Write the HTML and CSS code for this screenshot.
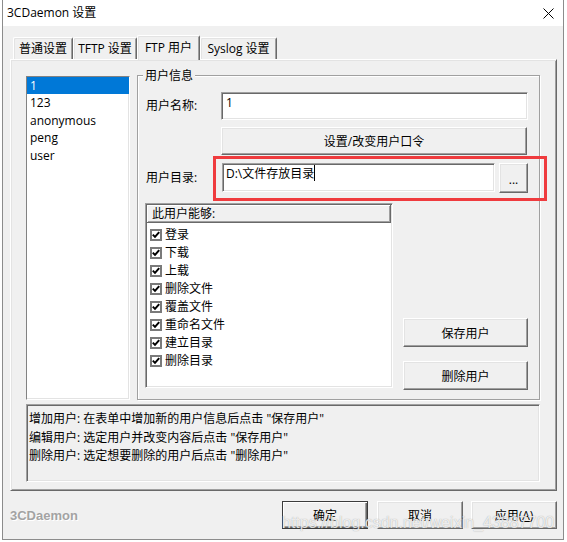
FILE: index.html
```html
<!DOCTYPE html>
<html lang="zh-CN">
<head>
  <meta charset="UTF-8">
  <title>3CDaemon 设置</title>
  <link rel="stylesheet" href="styles.css">
</head>
<body>
<div class="window">
  <div class="titlebar">
    <span class="title">3CDaemon 设置</span>
    <svg class="close" width="11" height="11" viewBox="0 0 11 11"><path d="M0.5 0.5L10.5 10.5M10.5 0.5L0.5 10.5" stroke="#000" stroke-width="1"/></svg>
  </div>
  <div class="body">
    <div class="tabs">
      <div class="tab t1">普通设置</div>
      <div class="tab t2">TFTP 设置</div>
      <div class="tab t3 active">FTP 用户</div>
      <div class="tab t4">Syslog 设置</div>
    </div>
    <div class="panel">
      <div class="panel-top">
        <ul class="userlist">
          <li class="selected">1</li>
          <li>123</li>
          <li>anonymous</li>
          <li>peng</li>
          <li>user</li>
        </ul>
        <div class="group">
          <div class="legend">用户信息</div>
          <div class="row name-row">
            <label>用户名称:</label>
            <div class="field name">1</div>
          </div>
          <div class="row pwd-row">
            <button class="btn pwd">设置/改变用户口令</button>
          </div>
          <div class="row dir-row">
            <label>用户目录:</label>
            <div class="field path">D:\文件存放目录<span class="caret"></span></div>
            <button class="btn browse">...</button>
            <div class="mark"></div>
          </div>
          <div class="row lower">
            <div class="perms">
              <div class="perms-head">此用户能够:</div>
              <ul class="perm-list">
                <li><span class="cb"><svg width="8" height="8" viewBox="0 0 8 8"><path d="M0.8 3.6L3 5.9L7.2 1.2" fill="none" stroke="#000" stroke-width="2"/></svg></span>登录</li>
                <li><span class="cb"><svg width="8" height="8" viewBox="0 0 8 8"><path d="M0.8 3.6L3 5.9L7.2 1.2" fill="none" stroke="#000" stroke-width="2"/></svg></span>下载</li>
                <li><span class="cb"><svg width="8" height="8" viewBox="0 0 8 8"><path d="M0.8 3.6L3 5.9L7.2 1.2" fill="none" stroke="#000" stroke-width="2"/></svg></span>上载</li>
                <li><span class="cb"><svg width="8" height="8" viewBox="0 0 8 8"><path d="M0.8 3.6L3 5.9L7.2 1.2" fill="none" stroke="#000" stroke-width="2"/></svg></span>删除文件</li>
                <li><span class="cb"><svg width="8" height="8" viewBox="0 0 8 8"><path d="M0.8 3.6L3 5.9L7.2 1.2" fill="none" stroke="#000" stroke-width="2"/></svg></span>覆盖文件</li>
                <li><span class="cb"><svg width="8" height="8" viewBox="0 0 8 8"><path d="M0.8 3.6L3 5.9L7.2 1.2" fill="none" stroke="#000" stroke-width="2"/></svg></span>重命名文件</li>
                <li><span class="cb"><svg width="8" height="8" viewBox="0 0 8 8"><path d="M0.8 3.6L3 5.9L7.2 1.2" fill="none" stroke="#000" stroke-width="2"/></svg></span>建立目录</li>
                <li><span class="cb"><svg width="8" height="8" viewBox="0 0 8 8"><path d="M0.8 3.6L3 5.9L7.2 1.2" fill="none" stroke="#000" stroke-width="2"/></svg></span>删除目录</li>
              </ul>
            </div>
            <div class="actions">
              <button class="btn save">保存用户</button>
              <button class="btn remove">删除用户</button>
            </div>
          </div>
        </div>
      </div>
      <div class="help">
        <div>增加用户: 在表单中增加新的用户信息后点击 "保存用户"</div>
        <div>编辑用户: 选定用户并改变内容后点击 "保存用户"</div>
        <div>删除用户: 选定想要删除的用户后点击 "删除用户"</div>
      </div>
    </div>
    <div class="footer">
      <span class="brand">3CDaemon</span>
      <button class="btn ok default">确定</button>
      <button class="btn cancel">取消</button>
      <button class="btn apply">应用(<u>A</u>)</button>
    </div>
  </div>
  <div class="watermark">https://blog.csdn.net/weixin_43887700</div>
</div>
</body>
</html>
```

FILE: styles.css
```css
* {
  box-sizing: border-box;
}
body {
  margin: 0;
  background: #fff;
  font-family: "Open Sans", "Noto Sans CJK SC", sans-serif;
  font-size: 12px;
  color: #000;
}
.window {
  position: relative;
  width: 562px;
  height: 540px;
  margin-left: 2px;
  border: 1px solid #8c8c8c;
  border-top: none;
  background: #f0f0f0;
}
.titlebar {
  height: 26px;
  background: #fff;
  display: flex;
  align-items: center;
  justify-content: space-between;
  padding: 0 9px 0 4px;
}
.title {
  line-height: 16px;
}
.body {
  padding-top: 9px;
}

/* tabs */
.tabs {
  display: flex;
  align-items: flex-end;
  height: 24px;
  padding-left: 10px;
}
.tab {
  height: 22px;
  line-height: 21px;
  text-align: center;
  background: #f0f0f0;
  border-top: 1px solid #fff;
  border-left: 1px solid #fff;
  border-right: 1px solid #696969;
  border-radius: 2px 2px 0 0;
  box-shadow: inset 1px 1px 0 #e3e3e3, inset -1px 0 0 #a0a0a0;
}
.t1 { width: 60px; }
.t2 { width: 64px; }
.t3 { width: 63px; }
.t4 { width: 77px; }
.tab.active {
  position: relative;
  z-index: 1;
  height: 25px;
  margin-bottom: -1px;
  line-height: 23px;
}

/* panel */
.panel {
  margin-left: 7px;
  width: 547px;
  height: 432px;
  border: 1px solid;
  border-color: #fff #696969 #696969 #fff;
  box-shadow: inset 1px 1px 0 #e3e3e3, inset -1px -1px 0 #a0a0a0;
  padding-left: 15px;
}
.panel-top {
  display: flex;
  align-items: flex-start;
}
.userlist {
  margin: 16px 0 0;
  padding: 0;
  list-style: none;
  width: 104px;
  height: 324px;
  background: #fff;
  border: 1px solid;
  border-color: #828282 #fff #fff #828282;
  box-shadow: inset -1px -1px 0 #e3e3e3;
}
.userlist li {
  height: 17.4px;
  line-height: 17.4px;
  padding-left: 3px;
}
.userlist li.selected {
  background: #0078d7;
  color: #fff;
}

/* user info group */
.group {
  margin: 15px 0 0 7px;
  width: 403px;
  height: 325px;
  border: 1px solid #a0a0a0;
  box-shadow: inset 1px 1px 0 #fff, 1px 1px 0 #fff;
  padding-left: 8px;
}
.legend {
  width: max-content;
  margin: -7px 0 0 -3px;
  padding: 0 2px;
  line-height: 13px;
  background: #f0f0f0;
}
.row {
  display: flex;
  align-items: center;
}
.row label {
  line-height: 16px;
}
.name-row {
  margin-top: 10px;
}
.name-row label {
  width: 75px;
}
.field {
  background: #fff;
  border: 1px solid;
  border-color: #a0a0a0 #fff #fff #a0a0a0;
  box-shadow: inset 1px 1px 0 #696969, inset -1px -1px 0 #e3e3e3;
  padding: 1px 4px;
  line-height: 17px;
}
.field.name {
  width: 307px;
  height: 28px;
}
.btn {
  font: inherit;
  color: #000;
  padding: 0;
  background: #f0f0f0;
  border: 1px solid;
  border-color: #fff #696969 #696969 #fff;
  box-shadow: inset -1px -1px 0 #a0a0a0, inset 1px 1px 0 #e3e3e3;
}
.pwd-row {
  margin-top: 7px;
}
.btn.pwd {
  margin-left: 75px;
  width: 306px;
  height: 28px;
}
.dir-row {
  position: relative;
  margin-top: 8px;
  align-items: flex-start;
}
.dir-row label {
  width: 76px;
  line-height: 29px;
}
.field.path {
  width: 273px;
  height: 29px;
  padding-left: 3px;
}
.caret {
  display: inline-block;
  width: 1px;
  height: 16px;
  background: #000;
  vertical-align: -3px;
}
.btn.browse {
  margin-left: 4px;
  width: 29px;
  height: 30px;
  line-height: 14px;
  padding-top: 4px;
}
.mark {
  position: absolute;
  left: 67px;
  top: -7px;
  width: 334px;
  height: 45px;
  border: 3px solid #ef3b3e;
  pointer-events: none;
}

/* permissions */
.lower {
  margin-top: 10px;
  align-items: flex-start;
}
.perms {
  margin-left: -1px;
  width: 248px;
  height: 185px;
  background: #fff;
  border: 1px solid;
  border-color: #a0a0a0 #fff #fff #a0a0a0;
  box-shadow: inset 1px 1px 0 #696969, inset -1px -1px 0 #e3e3e3;
  padding: 1px;
}
.perms-head {
  height: 18px;
  line-height: 17px;
  padding-left: 5px;
  background: #f0f0f0;
  border-bottom: 1px solid #696969;
  border-right: 1px solid #696969;
  box-shadow: inset 1px 1px 0 #fff, inset -1px -1px 0 #a0a0a0;
}
.perm-list {
  margin: 0;
  padding: 3px 0 0 3px;
  list-style: none;
}
.perm-list li {
  display: flex;
  align-items: center;
  height: 18px;
  line-height: 18px;
}
.cb {
  display: flex;
  width: 12px;
  height: 12px;
  margin-right: 3px;
  border: 2px solid #7a7a7a;
  background: #fff;
}
.actions {
  display: flex;
  flex-direction: column;
  margin-left: 10px;
  width: 125px;
}
.actions .btn {
  height: 29px;
}
.btn.save {
  margin-top: 115px;
}
.btn.remove {
  margin-top: 14px;
}

/* help text */
.help {
  margin-top: 4px;
  width: 514px;
  height: 78px;
  border: 1px solid;
  border-color: #a0a0a0 #fff #fff #a0a0a0;
  box-shadow: inset 1px 1px 0 #696969, inset -1px -1px 0 #e3e3e3;
  padding: 5px 0 0 2px;
  line-height: 18.5px;
}

/* footer */
.footer {
  display: flex;
  align-items: center;
  height: 48px;
  padding: 0 6px 0 7px;
}
.brand {
  font-family: "Liberation Sans", sans-serif;
  font-weight: bold;
  font-size: 13px;
  color: #a3a3a3;
  text-shadow: 1px 1px 0 #fff;
}
.footer .btn {
  width: 86px;
  height: 28px;
}
.btn.ok {
  margin-left: auto;
}
.btn.default {
  border-color: #3c3c3c;
  box-shadow: inset 1px 1px 0 #fff, inset -1px -1px 0 #696969, inset -2px -2px 0 #a0a0a0;
}
.btn.cancel {
  margin-left: 9px;
}
.btn.apply {
  margin-left: 8px;
}
.watermark {
  position: absolute;
  left: 279px;
  top: 515px;
  font-family: "Liberation Sans", sans-serif;
  font-size: 16px;
  line-height: 16px;
  color: rgba(255, 255, 255, 0.8);
  text-shadow: 0 0 1px rgba(90, 90, 90, 0.55);
  pointer-events: none;
}
```
